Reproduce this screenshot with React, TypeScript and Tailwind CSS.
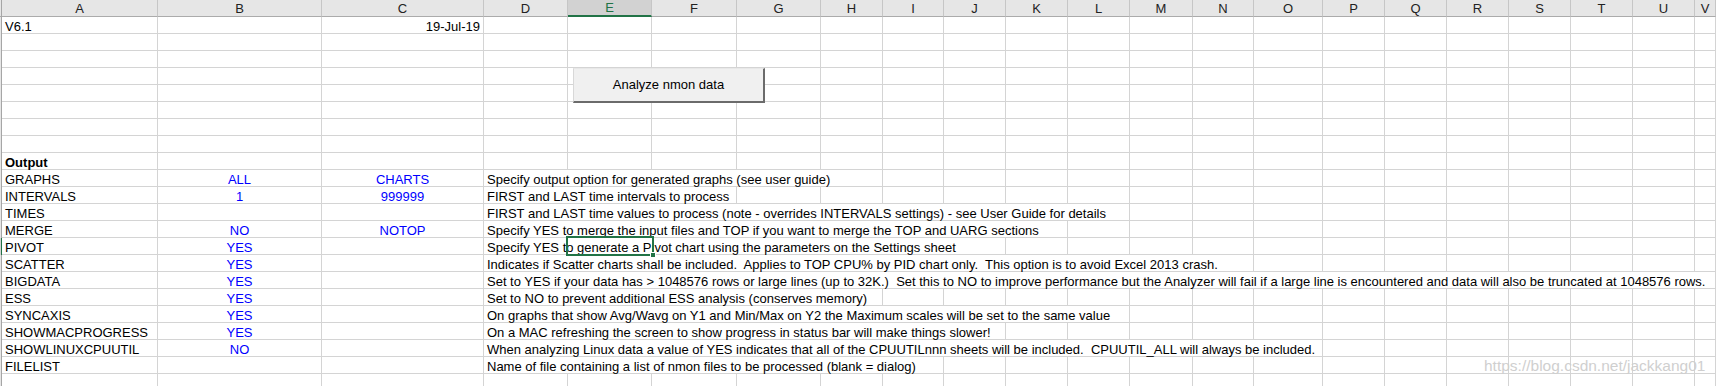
import React from 'react';

const LETTERS = ['', 'A', 'B', 'C', 'D', 'E', 'F', 'G', 'H', 'I', 'J', 'K', 'L', 'M', 'N', 'O', 'P', 'Q', 'R', 'S', 'T', 'U', 'V'];

// columns from D to the right edge
const TAIL = LETTERS.length - 4;

type Row = {
  a?: string;
  b?: string;
  c?: string;
  d?: string;
  span?: number;
  bold?: boolean;
  date?: string;
};

const ROWS: Row[] = [
  { a: 'V6.1', date: '19-Jul-19' },
  {},
  {},
  {},
  {},
  {},
  {},
  {},
  { a: 'Output', bold: true },
  { a: 'GRAPHS', b: 'ALL', c: 'CHARTS', d: 'Specify output option for generated graphs (see user guide)', span: 5 },
  { a: 'INTERVALS', b: '1', c: '999999', d: 'FIRST and LAST time intervals to process', span: 3 },
  { a: 'TIMES', d: 'FIRST and LAST time values to process (note - overrides INTERVALS settings) - see User Guide for details', span: 9 },
  { a: 'MERGE', b: 'NO', c: 'NOTOP', d: 'Specify YES to merge the input files and TOP if you want to merge the TOP and UARG sections', span: 8 },
  { a: 'PIVOT', b: 'YES', d: 'Specify YES to generate a Pivot chart using the parameters on the Settings sheet', span: 7 },
  { a: 'SCATTER', b: 'YES', d: 'Indicates if Scatter charts shall be included.  Applies to TOP CPU% by PID chart only.  This option is to avoid Excel 2013 crash.', span: 11 },
  { a: 'BIGDATA', b: 'YES', d: 'Set to YES if your data has > 1048576 rows or large lines (up to 32K.)  Set this to NO to improve performance but the Analyzer will fail if a large line is encountered and data will also be truncated at 1048576 rows.', span: 19 },
  { a: 'ESS', b: 'YES', d: 'Set to NO to prevent additional ESS analysis (conserves memory)', span: 5 },
  { a: 'SYNCAXIS', b: 'YES', d: 'On graphs that show Avg/Wavg on Y1 and Min/Max on Y2 the Maximum scales will be set to the same value', span: 9 },
  { a: 'SHOWMACPROGRESS', b: 'YES', d: 'On a MAC refreshing the screen to show progress in status bar will make things slower!', span: 7 },
  { a: 'SHOWLINUXCPUUTIL', b: 'NO', d: 'When analyzing Linux data a value of YES indicates that all of the CPUUTILnnn sheets will be included.  CPUUTIL_ALL will always be included.', span: 12 },
  { a: 'FILELIST', d: 'Name of file containing a list of nmon files to be processed (blank = dialog)', span: 6 },
  {},
];

const SPAN: Record<number, string> = {
  3: 'col-span-3',
  5: 'col-span-5',
  6: 'col-span-6',
  7: 'col-span-7',
  8: 'col-span-8',
  9: 'col-span-9',
  11: 'col-span-11',
  12: 'col-span-12',
  19: 'col-span-19',
};

const cell = 'h-[17px] border-r border-b border-[#d4d4d4] flex items-end leading-[13px] whitespace-pre';

const SheetRow = ({ row, index }: { row: Row; index: number }) => {
  const selected = index === 13;
  const span = row.d ? row.span ?? 1 : 0;
  const rest = TAIL - span;

  return (
    <>
      <div
        className={
          selected
            ? 'h-[17px] bg-[#d2d2d2] border-r border-[#217346]'
            : 'h-[17px] bg-[#e6e6e6] border-r border-[#a6a6a6]'
        }
      />
      <div className={`${cell} pl-[3px] ${row.bold ? 'font-bold' : ''}`}>{row.a}</div>
      <div className={`${cell} justify-center text-[#0000ff]`}>{row.b}</div>
      <div className={`${cell} ${row.date ? 'justify-end pr-[3px]' : 'justify-center text-[#0000ff]'}`}>
        {row.date ?? row.c}
      </div>
      {row.d ? <div className={`${cell} ${SPAN[span]} pl-[3px] overflow-visible`}>{row.d}</div> : null}
      {Array.from({ length: rest }).map((_, i) => (
        <div key={i} className={cell} />
      ))}
    </>
  );
};

export default function App() {
  return (
    <div className="relative h-[386px] w-[1716px] overflow-hidden bg-white font-['Liberation_Sans',Arial,sans-serif] text-[13px] text-black">
      <div className="grid grid-cols-[2px_156px_164px_162px_84px_84px_85px_84px_62px_61px_62px_62px_62px_63px_61px_69px_62px_62px_62px_62px_62px_62px_21px]">
        {LETTERS.map((l) =>
          l === 'E' ? (
            <div
              key={l}
              className="h-[17px] bg-[#d2d2d2] border-r border-[#c6c6c6] border-b-2 border-b-[#217346] flex items-center justify-center leading-[13px] text-[#217346]"
            >
              {l}
            </div>
          ) : (
            <div
              key={l || 'corner'}
              className={`h-[17px] bg-[#e6e6e6] border-b border-b-[#ababab] flex items-center justify-center leading-[13px] text-[#222] ${
                l ? 'border-r border-r-[#c6c6c6]' : 'border-r border-r-[#a6a6a6]'
              }`}
            >
              {l}
            </div>
          ),
        )}
        {ROWS.map((row, i) => (
          <SheetRow key={i} row={row} index={i} />
        ))}
      </div>

      {/* form button floating over the sheet */}
      <button
        type="button"
        className="absolute left-[573px] top-[68px] flex h-[35px] w-[192px] items-center justify-center border-t border-l border-t-[#e8e8e8] border-l-[#d8d8d8] border-r-2 border-b-2 border-r-[#6b6b6b] border-b-[#6b6b6b] bg-[#f0f0f0] text-[13px] text-black"
      >
        Analyze nmon data
      </button>

      {/* active cell E14 */}
      <div className="pointer-events-none absolute left-[566px] top-[236px] h-[20px] w-[88px] border-2 border-[#217346]">
        <div className="absolute -bottom-[4px] -right-[4px] h-[6px] w-[6px] border border-white bg-[#217346]" />
      </div>

      <div className="pointer-events-none absolute left-[1484px] top-[357px] text-[15.5px] leading-[18px] text-[#cfcfcf]">
        https://blog.csdn.net/jackkang01
      </div>
    </div>
  );
}
